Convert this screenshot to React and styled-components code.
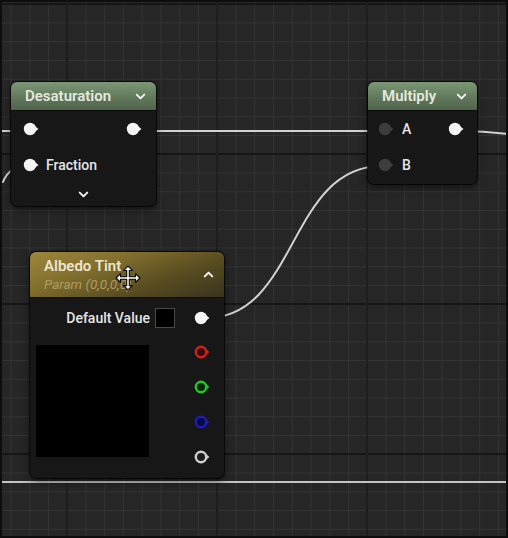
import React from 'react';
import styled, { createGlobalStyle } from 'styled-components';
import { ChevronDown, ChevronUp } from 'lucide-react';

const GlobalStyle = createGlobalStyle`
  html, body {
    margin: 0;
    padding: 0;
    background: #0c0c0c;
  }
  * {
    box-sizing: border-box;
  }
`;

const Canvas = styled.div`
  position: relative;
  width: 508px;
  height: 538px;
  overflow: hidden;
  border: 2px solid #0d0d0d;
  font-family: Roboto, 'Noto Sans', sans-serif;
  background-color: #262626;
  background-image:
    linear-gradient(to right, #1e1e1e 2px, transparent 2px),
    linear-gradient(to bottom, #161616 2px, transparent 2px),
    linear-gradient(to right, #333333 1px, transparent 1px),
    linear-gradient(to bottom, #333333 1px, transparent 1px);
  background-size: 150px 100%, 100% 150px, 18.75px 100%, 100% 18.75px;
  background-position: 64px 0, 0 1px, 8.5px 0, 0 20.5px;
`;

const Wires = styled.svg`
  position: absolute;
  inset: 0;
  width: 100%;
  height: 100%;
  pointer-events: none;
`;

const Node = styled.div`
  position: absolute;
  left: ${({ $x }) => $x}px;
  top: ${({ $y }) => $y}px;
  width: ${({ $w }) => $w}px;
  background: #161716;
  border-radius: 6px;
  box-shadow: 0 0 0 1px rgba(0, 0, 0, 0.7), 0 3px 8px rgba(0, 0, 0, 0.55);
  overflow: hidden;
`;

const Header = styled.div`
  display: flex;
  align-items: center;
  justify-content: space-between;
  height: ${({ $tall }) => ($tall ? 46 : 29)}px;
  padding: 0 8px 0 14px;
  border-bottom: 1px solid #0c0c0c;
  background: ${({ $kind }) =>
    $kind === 'param'
      ? 'linear-gradient(160deg, #9c873a 0%, #85722f 30%, #54491f 70%, #3a3420 100%)'
      : 'linear-gradient(180deg, #7c9776 0%, #62795c 55%, #50634b 100%)'};
`;

const TitleBlock = styled.div`
  display: flex;
  flex-direction: column;
  gap: 1px;
  margin-top: -1px;
`;

const Title = styled.div`
  font-size: 15px;
  font-weight: 600;
  color: ${({ $kind }) => ($kind === 'param' ? '#ece4cc' : '#e3e9df')};
`;

const Subtitle = styled.div`
  font-size: 13.5px;
  font-style: italic;
  color: #ae9c62;
`;

const Body = styled.div`
  display: flex;
  flex-direction: column;
  padding-bottom: ${({ $pb }) => $pb || 0}px;
`;

const Row = styled.div`
  display: flex;
  align-items: center;
  justify-content: ${({ $justify }) => $justify || 'flex-start'};
  height: ${({ $h }) => $h || 36}px;
  padding: ${({ $pad }) => $pad || '0'};
  gap: ${({ $gap }) => $gap || 0}px;
`;

const Label = styled.span`
  font-size: 14px;
  font-weight: 500;
  color: #e6e6e6;
`;

const Swatch = styled.div`
  width: 20px;
  height: 20px;
  background: #000;
  border: 1px solid #4a4a4a;
  margin-right: 14px;
`;

const Preview = styled.div`
  width: 113px;
  height: 112px;
  background: #000;
`;

const PinColumn = styled.div`
  display: flex;
  flex-direction: column;
  gap: 21px;
`;

const PreviewRow = styled.div`
  display: flex;
  justify-content: space-between;
  align-items: flex-start;
  margin-top: 7px;
  padding: 0 14px 0 6px;
`;

const Expander = styled.div`
  display: flex;
  justify-content: center;
  align-items: center;
  height: 22px;
  color: #f0f0f0;
`;

const ChevronBox = styled.div`
  display: flex;
  align-items: center;
  color: #f2f2f2;
`;

const MoveCursor = styled.svg`
  position: absolute;
  left: 113px;
  top: 263px;
  width: 26px;
  height: 26px;
`;

function Pin({ color = '#f4f4f4', ring = false, inner = '#1a1a1a' }) {
  return (
    <svg width="16" height="14" viewBox="0 0 16 14" style={{ display: 'block', flexShrink: 0 }}>
      <polygon points="11,3.5 15.5,7 11,10.5" fill={color} />
      {ring ? (
        <circle cx="7" cy="7" r="5.2" fill={inner} stroke={color} strokeWidth="2.4" />
      ) : (
        <circle cx="7" cy="7" r="6.2" fill={color} />
      )}
    </svg>
  );
}

export default function App() {
  return (
    <Canvas>
      <GlobalStyle />
      <Wires viewBox="0 0 504 534">
        <g fill="none" stroke="#d2d2d2" strokeWidth="2" strokeLinecap="round">
          <path d="M -2 129 L 26 129" />
          <path d="M 136 129 L 380 129" />
          <path d="M 458 129 C 480 129, 490 130, 506 132" />
          <path d="M 24 164 C 12 164, 5 170, 1 180" />
          <path d="M 204 316 C 296 316, 286 164, 380 164" />
          <path d="M -4 480 L 510 480" stroke="#c4c4c4" />
        </g>
      </Wires>

      <Node $x={9} $y={80} $w={145}>
        <Header $kind="material">
          <Title>Desaturation</Title>
          <ChevronBox>
            <ChevronDown size={15} strokeWidth={3.2} />
          </ChevronBox>
        </Header>
        <Body $pb={1}>
          <Row $justify="space-between" $pad="0 14px 0 12px">
            <Pin />
            <Pin />
          </Row>
          <Row $pad="0 0 0 12px" $gap={7}>
            <Pin />
            <Label>Fraction</Label>
          </Row>
          <Expander>
            <ChevronDown size={15} strokeWidth={3.2} />
          </Expander>
        </Body>
      </Node>

      <Node $x={366} $y={80} $w={109}>
        <Header $kind="material">
          <Title>Multiply</Title>
          <ChevronBox>
            <ChevronDown size={15} strokeWidth={3.2} />
          </ChevronBox>
        </Header>
        <Body $pb={1}>
          <Row $justify="space-between" $pad="0 13px 0 10px">
            <Row $h={36} $gap={8}>
              <Pin color="#3d3d3d" />
              <Label>A</Label>
            </Row>
            <Pin />
          </Row>
          <Row $pad="0 0 0 10px" $gap={8}>
            <Pin color="#3d3d3d" />
            <Label>B</Label>
          </Row>
        </Body>
      </Node>

      <Node $x={28} $y={250} $w={194}>
        <Header $kind="param" $tall>
          <TitleBlock>
            <Title $kind="param">Albedo Tint</Title>
            <Subtitle>Param (0,0,0,0)</Subtitle>
          </TitleBlock>
          <ChevronBox>
            <ChevronUp size={15} strokeWidth={3.2} />
          </ChevronBox>
        </Header>
        <Body $pb={14}>
          <Row $h={40} $justify="flex-end" $pad="0 14px 0 0" $gap={5}>
            <Label>Default Value</Label>
            <Swatch />
            <Pin />
          </Row>
          <PreviewRow>
            <Preview />
            <PinColumn>
              <Pin ring color="#d41f1f" inner="#3a0a0a" />
              <Pin ring color="#22c922" inner="#0d240d" />
              <Pin ring color="#1c1cc4" inner="#0a0a3a" />
              <Pin ring color="#cfcfcf" inner="#1c1c1c" />
            </PinColumn>
          </PreviewRow>
        </Body>
      </Node>

      <MoveCursor viewBox="0 0 24 24">
        <path
          d="M12 1 L16 5 H13.2 V10.8 H19 V8 L23 12 L19 16 V13.2 H13.2 V19 H16 L12 23 L8 19 H10.8 V13.2 H5 V16 L1 12 L5 8 V10.8 H10.8 V5 H8 Z"
          fill="#ffffff"
          stroke="#000000"
          strokeWidth="1"
          strokeLinejoin="round"
        />
      </MoveCursor>
    </Canvas>
  );
}
